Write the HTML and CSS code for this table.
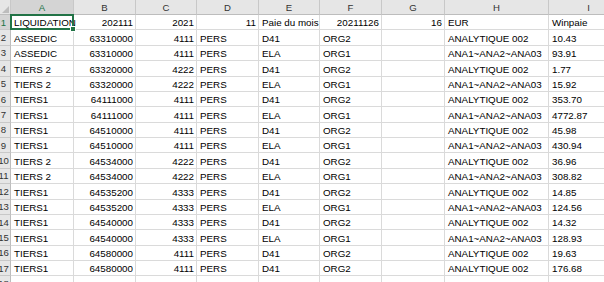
FILE: index.html
```html
<!DOCTYPE html>
<html>
<head>
<meta charset="utf-8">
<link rel="stylesheet" href="styles.css">
</head>
<body>
<div class="sheet">
  <div class="row head">
    <div class="c corner"></div>
    <div class="c sel">A</div><div class="c">B</div><div class="c">C</div><div class="c">D</div><div class="c">E</div><div class="c">F</div><div class="c">G</div><div class="c">H</div><div class="c">I</div>
  </div>
  <div class="row">
    <div class="c rn rsel">1</div>
    <div class="c a1">LIQUIDATION</div><div class="c n">202111</div><div class="c n">2021</div><div class="c n">11</div><div class="c">Paie du mois</div><div class="c n">20211126</div><div class="c n">16</div><div class="c">EUR</div><div class="c">Winpaie</div>
  </div>
  <div class="row"><div class="c rn">2</div><div class="c">ASSEDIC</div><div class="c n">63310000</div><div class="c n">4111</div><div class="c">PERS</div><div class="c">D41</div><div class="c">ORG2</div><div class="c"></div><div class="c">ANALYTIQUE 002</div><div class="c">10.43</div></div>
  <div class="row"><div class="c rn">3</div><div class="c">ASSEDIC</div><div class="c n">63310000</div><div class="c n">4111</div><div class="c">PERS</div><div class="c">ELA</div><div class="c">ORG1</div><div class="c"></div><div class="c">ANA1~ANA2~ANA03</div><div class="c">93.91</div></div>
  <div class="row"><div class="c rn">4</div><div class="c">TIERS 2</div><div class="c n">63320000</div><div class="c n">4222</div><div class="c">PERS</div><div class="c">D41</div><div class="c">ORG2</div><div class="c"></div><div class="c">ANALYTIQUE 002</div><div class="c">1.77</div></div>
  <div class="row"><div class="c rn">5</div><div class="c">TIERS 2</div><div class="c n">63320000</div><div class="c n">4222</div><div class="c">PERS</div><div class="c">ELA</div><div class="c">ORG1</div><div class="c"></div><div class="c">ANA1~ANA2~ANA03</div><div class="c">15.92</div></div>
  <div class="row"><div class="c rn">6</div><div class="c">TIERS1</div><div class="c n">64111000</div><div class="c n">4111</div><div class="c">PERS</div><div class="c">D41</div><div class="c">ORG2</div><div class="c"></div><div class="c">ANALYTIQUE 002</div><div class="c">353.70</div></div>
  <div class="row"><div class="c rn">7</div><div class="c">TIERS1</div><div class="c n">64111000</div><div class="c n">4111</div><div class="c">PERS</div><div class="c">ELA</div><div class="c">ORG1</div><div class="c"></div><div class="c">ANA1~ANA2~ANA03</div><div class="c">4772.87</div></div>
  <div class="row"><div class="c rn">8</div><div class="c">TIERS1</div><div class="c n">64510000</div><div class="c n">4111</div><div class="c">PERS</div><div class="c">D41</div><div class="c">ORG2</div><div class="c"></div><div class="c">ANALYTIQUE 002</div><div class="c">45.98</div></div>
  <div class="row"><div class="c rn">9</div><div class="c">TIERS1</div><div class="c n">64510000</div><div class="c n">4111</div><div class="c">PERS</div><div class="c">ELA</div><div class="c">ORG1</div><div class="c"></div><div class="c">ANA1~ANA2~ANA03</div><div class="c">430.94</div></div>
  <div class="row"><div class="c rn">10</div><div class="c">TIERS 2</div><div class="c n">64534000</div><div class="c n">4222</div><div class="c">PERS</div><div class="c">D41</div><div class="c">ORG2</div><div class="c"></div><div class="c">ANALYTIQUE 002</div><div class="c">36.96</div></div>
  <div class="row"><div class="c rn">11</div><div class="c">TIERS 2</div><div class="c n">64534000</div><div class="c n">4222</div><div class="c">PERS</div><div class="c">ELA</div><div class="c">ORG1</div><div class="c"></div><div class="c">ANA1~ANA2~ANA03</div><div class="c">308.82</div></div>
  <div class="row"><div class="c rn">12</div><div class="c">TIERS1</div><div class="c n">64535200</div><div class="c n">4333</div><div class="c">PERS</div><div class="c">D41</div><div class="c">ORG2</div><div class="c"></div><div class="c">ANALYTIQUE 002</div><div class="c">14.85</div></div>
  <div class="row"><div class="c rn">13</div><div class="c">TIERS1</div><div class="c n">64535200</div><div class="c n">4333</div><div class="c">PERS</div><div class="c">ELA</div><div class="c">ORG1</div><div class="c"></div><div class="c">ANA1~ANA2~ANA03</div><div class="c">124.56</div></div>
  <div class="row"><div class="c rn">14</div><div class="c">TIERS1</div><div class="c n">64540000</div><div class="c n">4333</div><div class="c">PERS</div><div class="c">D41</div><div class="c">ORG2</div><div class="c"></div><div class="c">ANALYTIQUE 002</div><div class="c">14.32</div></div>
  <div class="row"><div class="c rn">15</div><div class="c">TIERS1</div><div class="c n">64540000</div><div class="c n">4333</div><div class="c">PERS</div><div class="c">ELA</div><div class="c">ORG1</div><div class="c"></div><div class="c">ANA1~ANA2~ANA03</div><div class="c">128.93</div></div>
  <div class="row"><div class="c rn">16</div><div class="c">TIERS1</div><div class="c n">64580000</div><div class="c n">4111</div><div class="c">PERS</div><div class="c">D41</div><div class="c">ORG2</div><div class="c"></div><div class="c">ANALYTIQUE 002</div><div class="c">19.63</div></div>
  <div class="row"><div class="c rn">17</div><div class="c">TIERS1</div><div class="c n">64580000</div><div class="c n">4111</div><div class="c">PERS</div><div class="c">D41</div><div class="c">ORG2</div><div class="c"></div><div class="c">ANALYTIQUE 002</div><div class="c">176.68</div></div>
  <div class="row"><div class="c rn">18</div><div class="c"></div><div class="c"></div><div class="c"></div><div class="c"></div><div class="c"></div><div class="c"></div><div class="c"></div><div class="c"></div><div class="c"></div></div>
</div>
</body>
</html>
```
FILE: styles.css
```css
html, body {
  margin: 0;
  padding: 0;
  background: #ffffff;
  overflow: hidden;
  width: 604px;
  height: 282px;
}
.sheet {
  margin-left: -3px;
  font-family: "Liberation Sans", Arial, sans-serif;
  font-size: 9.8px;
  color: #000;
}
.row {
  display: grid;
  grid-template-columns: 14px 63px 62px 61px 62px 61px 62px 63px 104px 80px;
  height: 15.39px;
}
.c {
  box-sizing: border-box;
  border-right: 1px solid #dadada;
  border-bottom: 1px solid #dadada;
  padding: 0 2px 1px 3px;
  line-height: 11px;
  white-space: nowrap;
  overflow: hidden;
  display: flex;
  align-items: flex-end;
  min-width: 0;
}
.c.n {
  justify-content: flex-end;
}
.head {
  height: 15px;
}
.head .c {
  background: #e6e6e6;
  color: #333;
  border-right: 1px solid #c8c8c8;
  border-bottom: 1px solid #bdbdbd;
  justify-content: center;
  align-items: center;
  padding: 0;
  font-size: 9.6px;
}
.head .c.sel {
  background: #d4d4d4;
  color: #217346;
}
.head .corner {
  position: relative;
  background: #e6e6e6;
}
.corner::after {
  content: "";
  position: absolute;
  right: 1px;
  bottom: 1px;
  width: 0;
  height: 0;
  border-left: 7px solid transparent;
  border-bottom: 7px solid #bdbdbd;
}
.c.rn {
  background: #e6e6e6;
  color: #333;
  border-right: 1px solid #bdbdbd;
  border-bottom: 1px solid #c8c8c8;
  justify-content: center;
  align-items: center;
  padding: 0;
  overflow: visible;
  font-size: 9.6px;
}
.c.rsel {
  background: #d4d4d4;
  color: #217346;
}
.c.a1 {
  position: relative;
  overflow: visible;
}
.a1::after {
  content: "";
  position: absolute;
  left: -1px;
  top: -1px;
  right: -1px;
  bottom: -1px;
  border: 2px solid #217346;
  pointer-events: none;
}
.a1::before {
  content: "";
  position: absolute;
  right: -3px;
  bottom: -3px;
  width: 4px;
  height: 4px;
  background: #217346;
  border: 1px solid #ffffff;
  z-index: 2;
}
```
